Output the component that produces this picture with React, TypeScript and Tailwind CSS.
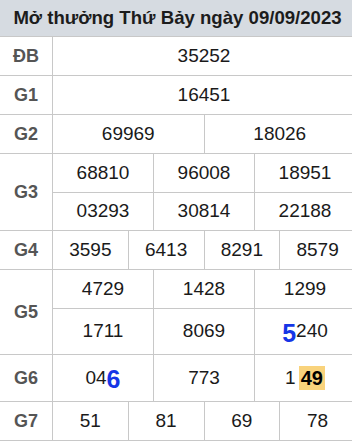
import React from 'react';

type Cell = React.ReactNode;

const font = { fontFamily: '"Liberation Sans", Arial, sans-serif' };

function Row({ label, rows, heights }: { label: string; rows: Cell[][]; heights: string[] }) {
  return (
    <div className="flex border-b border-[#c8c8c8]">
      <div className="flex w-[53px] shrink-0 items-center justify-center border-r border-[#c8c8c8] text-[18px] font-bold text-[#555]">
        {label}
      </div>
      <div className="flex flex-1 flex-col">
        {rows.map((cells, i) => (
          <div
            key={i}
            className={`flex ${heights[i]} ${i > 0 ? 'border-t border-[#c8c8c8]' : ''}`}
          >
            {cells.map((c, j) => (
              <div
                key={j}
                className={`flex flex-1 basis-0 items-center justify-center text-[19px] text-[#1a1a1a] ${
                  j > 0 ? 'border-l border-[#c8c8c8]' : ''
                }`}
              >
                {c}
              </div>
            ))}
          </div>
        ))}
      </div>
    </div>
  );
}

const Blue = ({ children }: { children: React.ReactNode }) => (
  <span className="text-[25px] leading-none font-bold text-[#1536e6]">{children}</span>
);

export default function App() {
  return (
    <div className="h-[443px] w-[352px] overflow-hidden bg-white" style={font}>
      <div className="w-[355px]">
        <div className="flex h-[37px] items-center justify-center border-b border-[#c8c8c8] bg-[#d6dbe1] text-[18.6px] font-bold text-[#1c1c1c]">
          Mở thưởng Thứ Bảy ngày 09/09/2023
        </div>
        <Row label="ĐB" rows={[['35252']]} heights={['h-[38px]']} />
        <Row label="G1" rows={[['16451']]} heights={['h-[38px]']} />
        <Row label="G2" rows={[['69969', '18026']]} heights={['h-[38px]']} />
        <Row
          label="G3"
          rows={[
            ['68810', '96008', '18951'],
            ['03293', '30814', '22188'],
          ]}
          heights={['h-[38px]', 'h-[38px]']}
        />
        <Row label="G4" rows={[['3595', '6413', '8291', '8579']]} heights={['h-[38px]']} />
        <Row
          label="G5"
          rows={[
            ['4729', '1428', '1299'],
            [
              '1711',
              '8069',
              <span key="a" className="flex items-end">
                <Blue>5</Blue>
                <span>240</span>
              </span>,
            ],
          ]}
          heights={['h-[38px]', 'h-[46px]']}
        />
        <Row
          label="G6"
          rows={[
            [
              <span key="a" className="flex items-end">
                <span>04</span>
                <Blue>6</Blue>
              </span>,
              '773',
              <span key="b" className="flex items-center">
                <span>1</span>
                <span className="ml-[3px] flex h-[24px] items-center bg-[#f9d37c] px-[2px] text-[20px] font-bold text-black">
                  49
                </span>
              </span>,
            ],
          ]}
          heights={['h-[46px]']}
        />
        <Row label="G7" rows={[['51', '81', '69', '78']]} heights={['h-[38px]']} />
      </div>
    </div>
  );
}
